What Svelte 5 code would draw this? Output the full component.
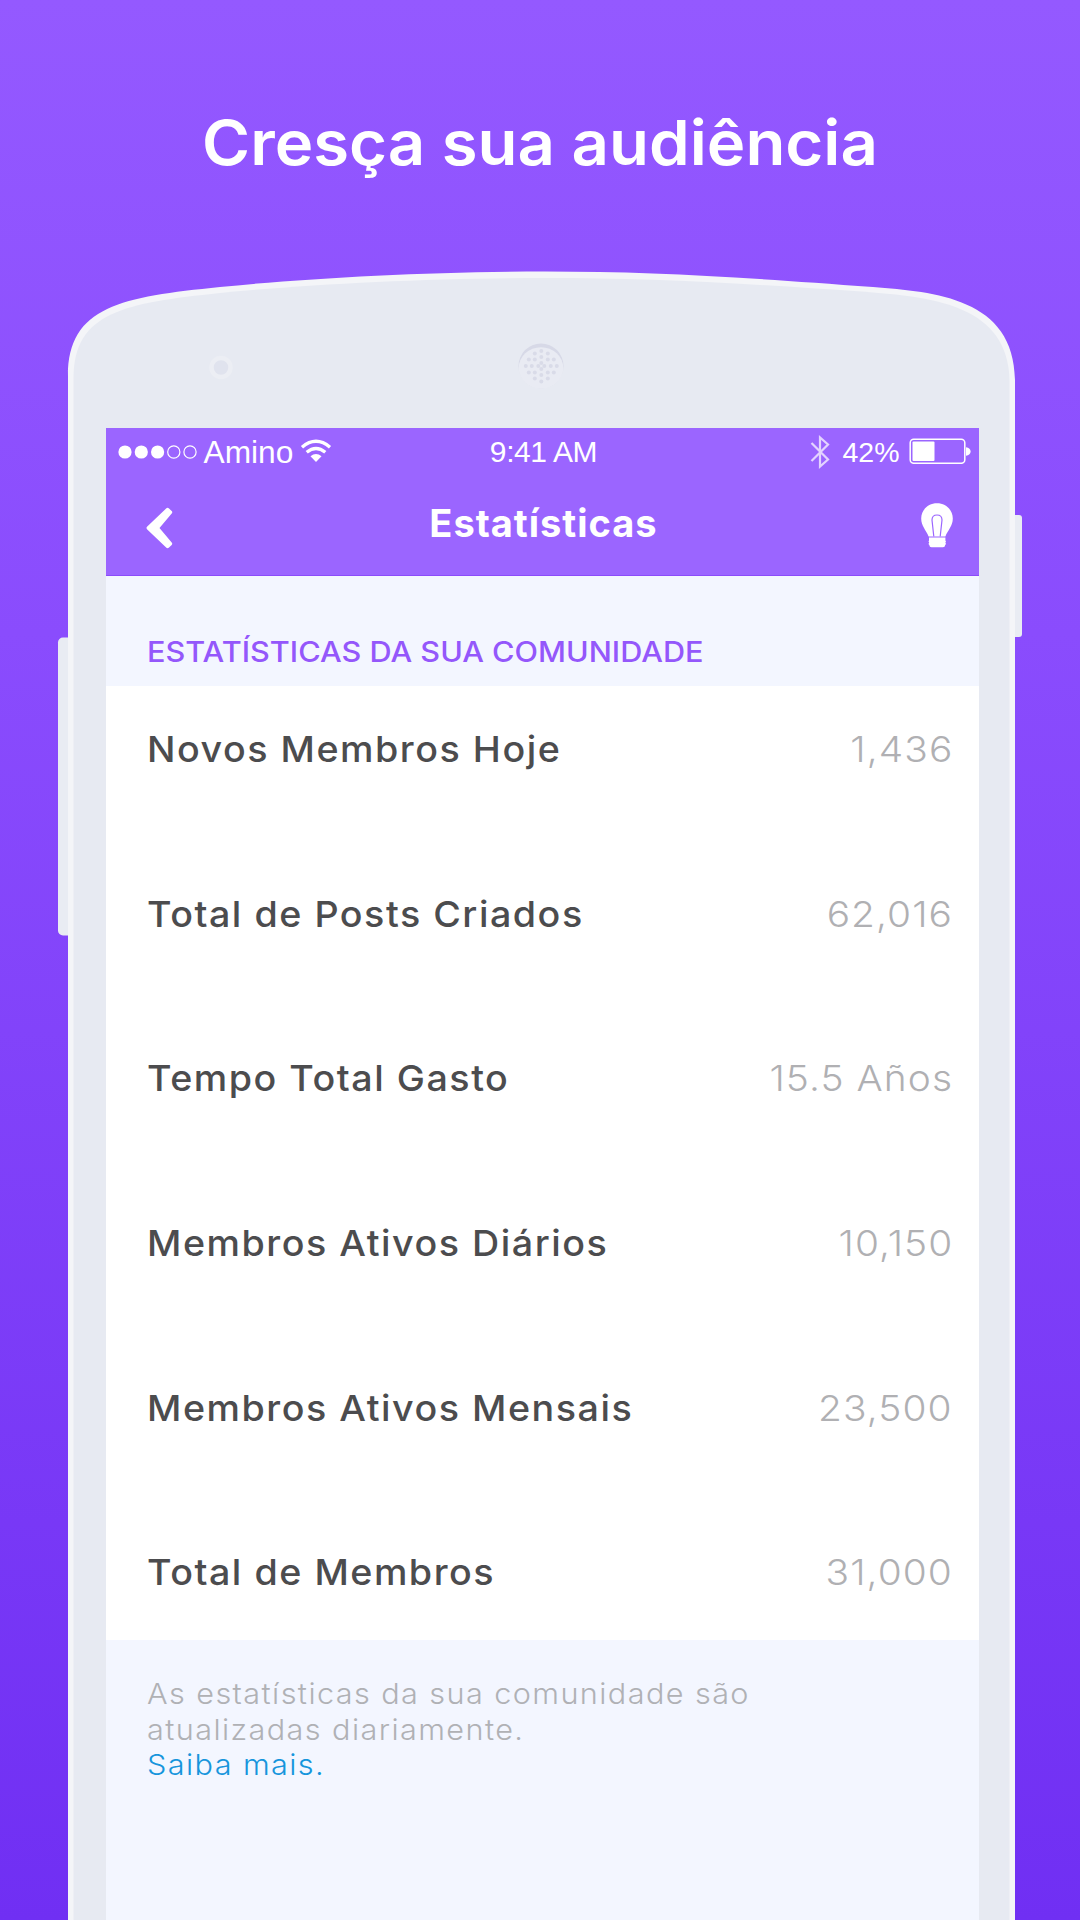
<script>
  const stats = [
    { label: 'Novos Membros Hoje', value: '1,436' },
    { label: 'Total de Posts Criados', value: '62,016' },
    { label: 'Tempo Total Gasto', value: '15.5 Años' },
    { label: 'Membros Ativos Diários', value: '10,150' },
    { label: 'Membros Ativos Mensais', value: '23,500' },
    { label: 'Total de Membros', value: '31,000' }
  ];

  // Speaker grille: holes on rings around the centre.
  const holes = [
    [0, -15], [0, -9], [0, -3], [0, 3], [0, 9], [0, 15.5],
    [-15.5, 0], [-9.5, 0], [-3, 0], [3, 0], [9.5, 0], [15.5, 0],
    [-6.5, -12.5], [6.5, -12.5], [-6.5, 12.5], [6.5, 12.5],
    [-6.5, -6.5], [6.5, -6.5], [-6.5, 6.5], [6.5, 6.5],
    [-12.5, -6.5], [12.5, -6.5], [-12.5, 6.5], [12.5, 6.5]
  ];
</script>

<main class="stage">
  <h1>Cresça sua audiência</h1>

  <section class="phone">
    <svg class="frame" width="1080" height="1660" viewBox="0 260 1080 1660" aria-hidden="true">
      <rect x="58" y="637.5" width="20" height="298" rx="5" fill="#e9ecf3" />
      <rect x="1002" y="515" width="20" height="122" rx="3" fill="#e9ecf3" />
      <path class="rim" d="M68 1930V376C68 306 122 297 220 287C310 278 430 271.500 545 271.500C650 271.500 740 277 873 287C935 292 1014 298 1015 380V1930Z" />
      <path class="shell" d="M73.500 1930V378C73.500 312 125 303 220 293C310 284 430 278 545 278C650 278 740 283 873 292.500C932 297.500 1008.500 305 1009.500 381V1930Z" />
      <circle cx="221" cy="367.500" r="9.500" fill="#e0e3ee" stroke="#eceef4" stroke-width="4.500" />
      <circle cx="541" cy="366" r="22.500" fill="#d7d9e7" />
      <ellipse cx="541" cy="368" rx="22.300" ry="20.800" fill="#e9ebf3" />
      {#each holes as [x, y]}
        <circle cx={541.3 + x} cy={366 + y} r="2" fill="#d9dbe8" />
      {/each}
    </svg>

    <div class="screen">
      <header>
        <div class="status">
          <div class="carrier">
            <svg width="80" height="16" viewBox="0 0 80 16">
              <g fill="#fff">
                <circle cx="7" cy="8" r="6.600" /><circle cx="23.300" cy="8" r="6.600" /><circle cx="39.600" cy="8" r="6.600" />
              </g>
              <g fill="none" stroke="#fff" stroke-width="1.200">
                <circle cx="55.800" cy="8" r="6.100" /><circle cx="72" cy="8" r="6.100" />
              </g>
            </svg>
            <span class="name">Amino</span>
            <svg class="wifi" width="32" height="24" viewBox="0 0 32 24">
              <g fill="none" stroke="#fff" stroke-width="3.400">
                <path d="M2 8.200Q16 -3.600 30 8.200" />
                <path d="M6.700 13.300Q16 5.600 25.300 13.300" />
              </g>
              <path d="M10.500 17.200Q16 12.800 21.500 17.200L16 23Z" fill="#fff" />
            </svg>
          </div>
          <span class="clock">9:41 AM</span>
          <div class="power">
            <svg width="20" height="34" viewBox="0 0 20 34" fill="none" stroke="#e3d3ff" stroke-width="2.200">
              <path d="M1.500 8L18 24.500L10 31.500V2.500L18 9.500L1.500 26" />
            </svg>
            <span class="percent">42%</span>
            <svg width="62" height="28" viewBox="0 0 62 28">
              <rect x="1.200" y="1.200" width="54.600" height="24" rx="3.500" fill="none" stroke="#fff" stroke-width="1.500" />
              <rect x="3.500" y="3.500" width="22" height="19.500" rx="1" fill="#fff" />
              <path d="M57 9.200Q61.600 10 61.600 13.500T57 17.800Z" fill="#fff" />
            </svg>
          </div>
        </div>
        <nav>
          <svg class="back" width="28" height="42" viewBox="0 0 28 42">
            <path d="M20.400 1.200Q21.700 .2 23 1.400L25.700 4Q26.800 5.200 25.700 6.500L13.500 21L25.700 35.500Q26.800 36.800 25.700 38L23 40.600Q21.700 41.800 20.400 40.800L1 22.200Q0 21 1 19.800Z" fill="#fff" />
          </svg>
          <h2>Estatísticas</h2>
          <svg width="32" height="45" viewBox="0 0 32 45">
            <path d="M16 .3C7 .3 .2 7 .2 15.500C.2 23 5 27 7.600 33.400H24.400C27 27 31.800 23 31.800 15.500C31.800 7 25 .3 16 .3Z" fill="#fff" />
            <path d="M8 34.600H24.400V37.500L25 38.500L24.400 39.500L25 41L24.200 42Q24 44.200 22 44.200H10.500Q8.500 44.200 8.300 42L7.500 41L8.200 39.500L7.500 38.500L8 37.500Z" fill="#fff" />
            <path d="M12.800 33.500L11 17Q11 12 16 12T21 17L19.200 33.500" fill="none" stroke="#9b66ff" stroke-width="1.200" />
          </svg>
        </nav>
      </header>

      <h3>ESTATÍSTICAS DA SUA COMUNIDADE</h3>

      <dl>
        {#each stats as stat}
          <div class="row">
            <dt>{stat.label}</dt>
            <dd>{stat.value}</dd>
          </div>
        {/each}
      </dl>

      <footer>
        <p>As estatísticas da sua comunidade são</p>
        <p>atualizadas diariamente.</p>
        <p class="link">Saiba mais.</p>
      </footer>
    </div>
  </section>
</main>

<style>
  :global(body) { margin: 0; }
  h1, h2, h3, dl, dt, dd, p { margin: 0; font-weight: 500; }
  svg { display: block; flex: none; }
  .stage {
    width: 1080px;
    height: 1920px;
    overflow: hidden;
    display: flex;
    flex-direction: column;
    background: linear-gradient(#9459ff, #8a4cfd 33%, #702ff3);
    font-family: Inter, "Liberation Sans", sans-serif;
  }
  h1 {
    height: 260px;
    flex: none;
    padding-top: 98px;
    box-sizing: border-box;
    text-align: center;
    font-size: 62px;
    font-weight: 600;
    line-height: 90px;
    color: #fff;
    white-space: nowrap;
    transform: scaleX(1.053);
  }
  .phone {
    position: relative;
    height: 1660px;
    box-sizing: border-box;
    padding: 168px 101.500px 0 105.500px;
  }
  .frame { position: absolute; left: 0; top: 0; }
  .rim { fill: #f4f5f8; }
  .shell { fill: #e7eaf2; }
  .screen {
    position: relative;
    height: 1492px;
    display: flex;
    flex-direction: column;
    background: #f3f6ff;
  }
  header {
    height: 148px;
    background: #9b65ff;
    border-bottom: 1px solid #8b4bfa;
    box-sizing: border-box;
    color: #fff;
  }
  .status {
    height: 48px;
    display: grid;
    grid-template-columns: 1fr auto 1fr;
    align-items: center;
    padding: 0 8px 0 12px;
    font-family: "Liberation Sans", sans-serif;
    white-space: nowrap;
  }
  .carrier, .power { display: flex; align-items: center; }
  .carrier { gap: 5px; }
  .power { justify-content: flex-end; }
  .name { font-size: 31.700px; margin-left: 1px; }
  .wifi { margin-left: 2px; margin-bottom: 2px; }
  .clock { font-size: 30px; letter-spacing: -.4px; margin-right: 1px; }
  .percent { font-size: 28.500px; margin: 0 9px 0 12px; }
  nav {
    height: 99px;
    display: flex;
    align-items: center;
    justify-content: space-between;
    padding: 0 25.500px 0 40.500px;
  }
  .back { margin-top: 4px; }
  h2 { font-size: 38px; font-weight: 700; letter-spacing: 1px; margin: 0 8px 6px 0; }
  h3 {
    height: 110px;
    box-sizing: border-box;
    padding: 56px 0 0;
    margin-left: 41px;
    font-size: 28px;
    line-height: 40px;
    color: #9457fb;
    white-space: nowrap;
    transform: scaleX(1.094);
    transform-origin: left;
  }
  dl { height: 954px; background: #fff; }
  .row {
    height: 164.700px;
    display: flex;
    justify-content: space-between;
    padding: 38px 25.500px 0 41px;
    box-sizing: border-box;
    line-height: 50px;
    white-space: nowrap;
  }
  dt {
    font-size: 36px;
    color: #4c4c4e;
    letter-spacing: 1.450px;
    transform: scaleX(1.046);
    transform-origin: left;
  }
  dd {
    font-size: 36px;
    font-weight: 300;
    color: #b0b0b3;
    letter-spacing: 1px;
    transform: scaleX(1.080);
    transform-origin: right;
  }
  footer { padding: 36px 41px 0; color: #b0b1b5; }
  footer p {
    font-size: 28.500px;
    font-weight: 300;
    line-height: 35.700px;
    letter-spacing: 1.300px;
    white-space: nowrap;
    transform: scaleX(1.075);
    transform-origin: left;
  }
  footer .link { color: #1695dc; }
</style>
